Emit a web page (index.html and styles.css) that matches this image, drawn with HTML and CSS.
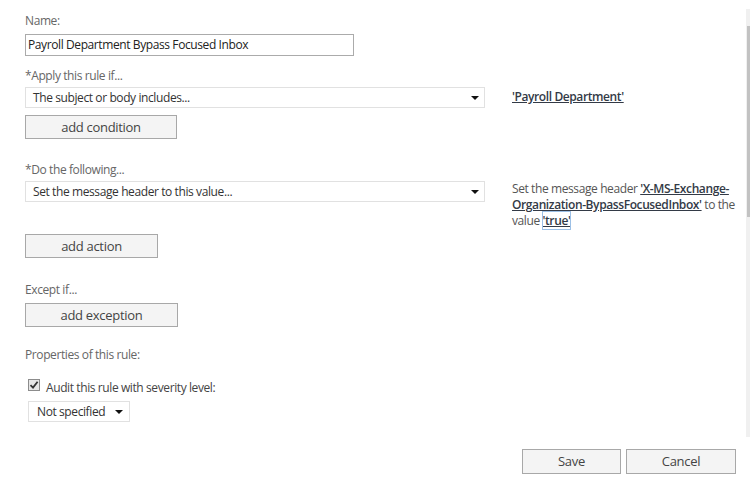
FILE: index.html
```html
<!DOCTYPE html>
<html>
<head>
<meta charset="utf-8">
<link rel="stylesheet" href="styles.css">
</head>
<body>
<div class="page">
  <div class="scrollarea">
    <div class="content">
      <div class="label first">Name:</div>
      <div class="textbox">Payroll Department Bypass Focused Inbox</div>

      <div class="label sec">*Apply this rule if...</div>
      <div class="row">
        <div class="select wide"><span>The subject or body includes...</span><span class="arrow"></span></div>
        <div class="desc one"><a class="link">'Payroll Department'</a></div>
      </div>
      <div class="btn b1 w151">add condition</div>

      <div class="label sec2">*Do the following...</div>
      <div class="row">
        <div class="select wide"><span>Set the message header to this value...</span><span class="arrow"></span></div>
        <div class="desc">Set the message header <a class="link">'X-MS-Exchange-<br>Organization-BypassFocusedInbox'</a> to the<br>value <a class="link focus">'true'</a></div>
      </div>
      <div class="btn b2 w132">add action</div>

      <div class="label sec3">Except if...</div>
      <div class="btn b3 w152">add exception</div>

      <div class="label sec4">Properties of this rule:</div>
      <div class="check">
        <span class="box"><svg width="10" height="10" viewBox="0 0 10 10"><path d="M1.5 5.2 L4 7.6 L8.6 1.8" fill="none" stroke="#333" stroke-width="1.8"/></svg></span>
        <span>Audit this rule with severity level:</span>
      </div>
      <div class="select small"><span>Not specified</span><span class="arrow"></span></div>
    </div>
    <div class="scrollbar"><div class="thumb"></div></div>
  </div>
  <div class="footer">
    <div class="btn fbtn save">Save</div>
    <div class="btn fbtn cancel">Cancel</div>
  </div>
</div>
</body>
</html>
```

FILE: styles.css
```css
html, body {
  margin: 0;
  padding: 0;
  background: #ffffff;
}
body {
  font-family: "Open Sans", "Noto Sans", "DejaVu Sans", sans-serif;
  font-size: 12px;
  letter-spacing: -0.4px;
  color: #333333;
  width: 750px;
  height: 482px;
  overflow: hidden;
}
.page {
  display: flex;
  flex-direction: column;
}
.scrollarea {
  display: flex;
  height: 437px;
}
.content {
  flex: 1;
  padding-left: 25px;
}
.scrollbar {
  width: 4px;
  margin-top: 9px;
  height: 428px;
  background: #f0f0f0;
  display: flex;
  flex-direction: column;
}
.thumb {
  margin-top: 17px;
  margin-left: 1px;
  width: 3px;
  height: 191px;
  background: #c2c2c2;
}
.label {
  color: #666666;
  line-height: 16px;
  height: 16px;
}
.first { margin-top: 13px; }
.sec { margin-top: 12px; }
.sec2 { margin-top: 23px; }
.sec3 { margin-top: 24px; }
.sec4 { margin-top: 20px; }
.textbox {
  margin-top: 5px;
  width: 325px;
  height: 20px;
  border: 1px solid #ababab;
  line-height: 20px;
  padding-left: 2px;
  color: #222222;
  box-sizing: content-box;
  white-space: nowrap;
}
.row {
  display: flex;
  align-items: flex-start;
  margin-top: 3px;
}
.select {
  display: flex;
  align-items: center;
  justify-content: space-between;
  border: 1px solid #e1e1e1;
  height: 19px;
  color: #333333;
  background: #fff;
  white-space: nowrap;
}
.wide {
  width: 446px;
  padding-left: 7px;
  padding-right: 5px;
}
.arrow {
  flex: none;
  width: 0;
  height: 0;
  border-left: 4px solid transparent;
  border-right: 4px solid transparent;
  border-top: 4px solid #111;
}
.desc {
  margin-left: 27px;
  width: 228px;
  line-height: 16px;
  color: #555555;
  white-space: nowrap;
}
.desc.one { margin-top: 2px; }
.link {
  color: #333a46;
  font-weight: 600;
  text-decoration: underline;
}
.focus {
  outline: 1px solid #9cc0e6;
}
.btn {
  box-sizing: border-box;
  height: 24px;
  border: 1px solid #a8a8a8;
  background: #f4f4f4;
  color: #444444;
  font-size: 13px;
  letter-spacing: -0.3px;
  text-align: center;
  line-height: 22px;
}
.b1 { margin-top: 7px; }
.b2 { margin-top: 5px; }
.b3 { margin-top: 5px; }
.w151 { width: 152px; }
.w132 { width: 133px; }
.w152 { width: 153px; }
.check {
  display: flex;
  align-items: flex-start;
  margin-top: 17px;
  margin-left: 3px;
  height: 16px;
  line-height: 16px;
  color: #444444;
}
.box {
  box-sizing: border-box;
  width: 12px;
  height: 12px;
  margin-top: -1px;
  border: 1px solid #8c8c8c;
  background: #e6e6e6;
  display: flex;
  align-items: center;
  justify-content: center;
  margin-right: 6px;
}
.small {
  box-sizing: border-box;
  margin-top: 5px;
  margin-left: 3px;
  width: 102px;
  height: 21px;
  padding-left: 8px;
  padding-right: 6px;
}
.footer {
  display: flex;
  margin-top: 12px;
  padding-left: 522px;
  gap: 5px;
}
.fbtn {
  height: 25px;
  line-height: 23px;
}
.save { width: 99px; }
.cancel { width: 110px; }
```
